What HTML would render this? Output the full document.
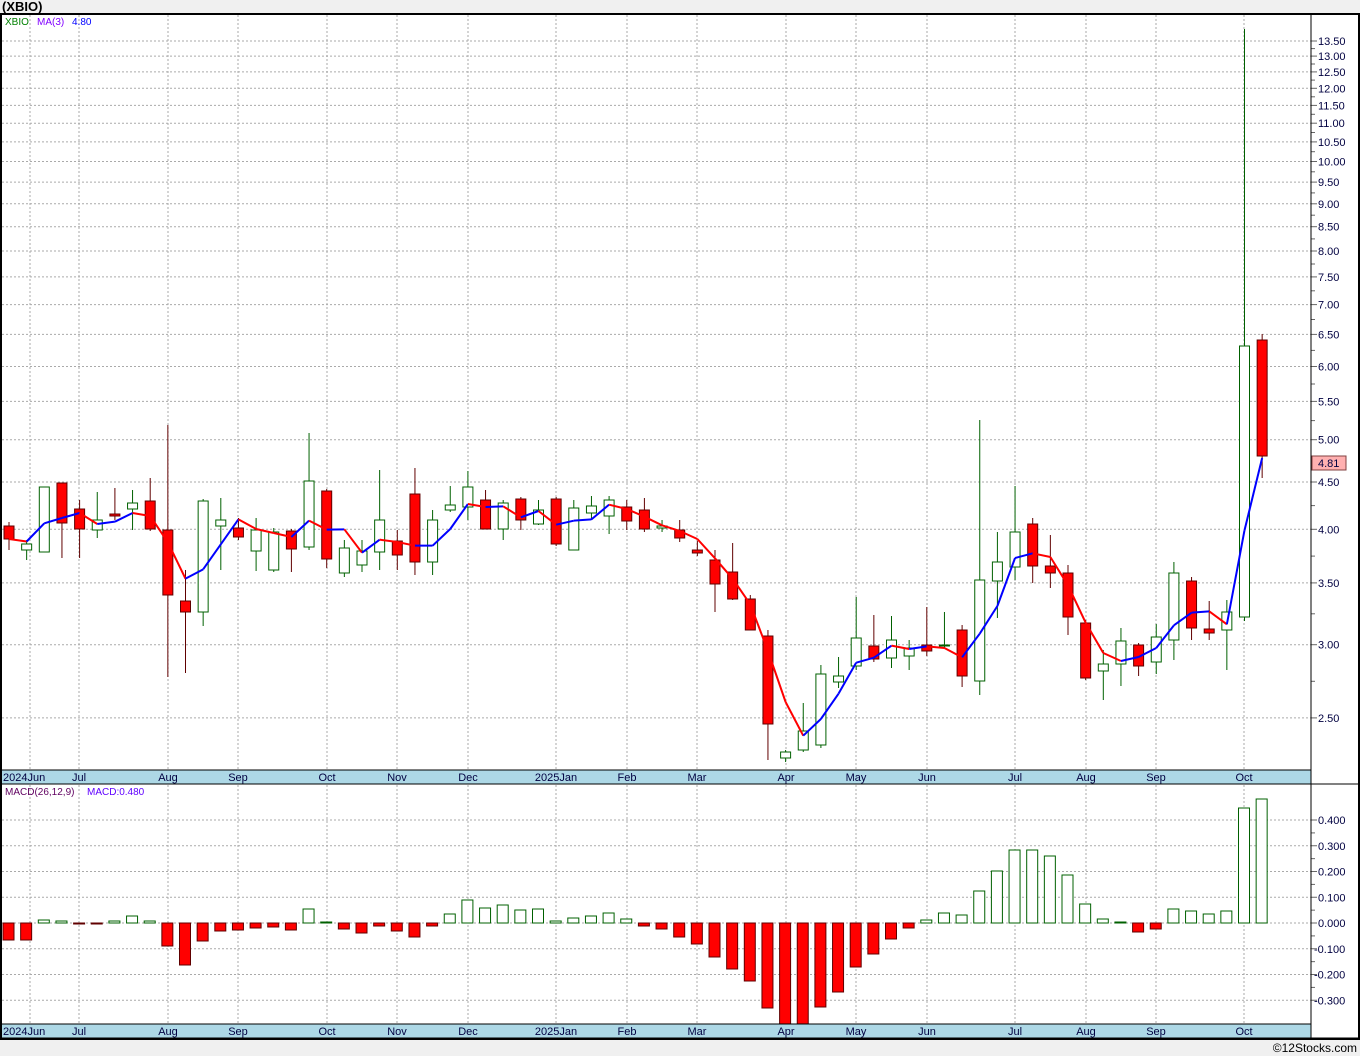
<!DOCTYPE html>
<html><head><meta charset="utf-8"><style>
html,body{margin:0;padding:0;background:#f0f0f0;}
body{width:1360px;height:1056px;position:relative;overflow:hidden;font-family:"Liberation Sans",sans-serif;}
svg{position:absolute;left:0;top:0;}
</style></head><body>
<svg id="s" width="1360" height="1056" xmlns="http://www.w3.org/2000/svg" font-family="Liberation Sans, sans-serif">
<text x="2" y="11" font-size="13" font-weight="bold" fill="#000">(XBIO)</text>
<rect x="1" y="14" width="1358" height="1025" fill="#fff" stroke="#000" stroke-width="2"/>
<g id="g"></g>
<text x="5" y="25" font-size="10" fill="#008000">XBIO</text>
<text x="37" y="25" font-size="10" fill="#8000ff">MA(3)</text>
<text x="72" y="25" font-size="10" fill="#0000ff">4.80</text>
<text x="5" y="795" font-size="10" fill="#600060">MACD(26,12,9)</text>
<text x="87" y="795" font-size="10" fill="#6000ff">MACD:0.480</text>
<text x="1357" y="1052" font-size="12" fill="#000" text-anchor="end">©12Stocks.com</text>
</svg>
<script>
var g=document.getElementById('g'),h='';
function ly(p){return 41+(Math.log(13.5)-Math.log(p))*401.4;}
// grid months
var mx=[79,168,238,327,397,468,556,627,697,786,856,927,1015,1086,1156,1244];
var ml=['Jul','Aug','Sep','Oct','Nov','Dec','2025Jan','Feb','Mar','Apr','May','Jun','Jul','Aug','Sep','Oct'];
mx.concat([30]).forEach(function(x){h+='<line x1="'+x+'" y1="15" x2="'+x+'" y2="770" stroke="#aaa" stroke-dasharray="2,2"/><line x1="'+x+'" y1="785" x2="'+x+'" y2="1024" stroke="#aaa" stroke-dasharray="2,2"/>';});
var tk=[];for(var p=13.5;p>=4.49;p-=0.5)tk.push(p);tk=tk.concat([4,3.5,3,2.5]);
tk.forEach(function(p){var y=ly(p).toFixed(1);h+='<line x1="2" y1="'+y+'" x2="1311" y2="'+y+'" stroke="#aaa" stroke-dasharray="2,2"/><line x1="1311" y1="'+y+'" x2="1317" y2="'+y+'" stroke="#666"/><text x="1318" y="'+(+y+4)+'" font-size="11" fill="#000040">'+p.toFixed(2)+'</text>';});
for(var i=0;i<tk.length-1;i++){var y=((ly(tk[i])+ly(tk[i+1]))/2).toFixed(1);h+='<line x1="1311" y1="'+y+'" x2="1315" y2="'+y+'" stroke="#666"/>';}
[0.4,0.3,0.2,0.1,0,-0.1,-0.2,-0.3].forEach(function(v){var y=923-v*257.5;h+='<line x1="2" y1="'+y+'" x2="1311" y2="'+y+'" stroke="#aaa" stroke-dasharray="2,2"/><line x1="1311" y1="'+y+'" x2="1317" y2="'+y+'" stroke="#666"/><text x="'+(v<0?1314:1318)+'" y="'+(y+4)+'" font-size="11" fill="#000040">'+(v<0?'-':'')+Math.abs(v).toFixed(3)+'</text>';
 var y2=y+12.9;if(v>-0.3)h+='<line x1="1311" y1="'+y2+'" x2="1315" y2="'+y2+'" stroke="#666"/>';});
var C=[[0,526,539,522,550],[1,544,550,540,560],[1,487,552,487,552],[0,483,523,483,558],[0,509,529,500,558],[1,520,530,492,538],[0,514,516,488,520],[1,503,509,490,530],[0,501,529,478,531],[0,530,595,425,677],[0,601,612,570,673],[1,501,612,499,626],[1,520,526,498,570],[0,528,537,518,540],[1,530,551,518,571],[1,532,570,528,572],[0,531,549,529,572],[1,481,547,433,550],[0,491,559,489,568],[1,548,573,540,577],[1,551,565,540,572],[1,520,552,470,570],[0,541,555,530,570],[0,494,562,468,575],[1,520,562,510,575],[1,505,510,486,512],[1,487,507,471,520],[0,500,529,490,529],[1,503,529,500,540],[0,499,520,497,530],[1,510,524,500,525],[0,499,544,497,546],[1,508,550,500,550],[1,506,513,496,520],[1,500,516,496,534],[0,507,521,500,530],[0,510,529,498,532],[1,526,528,520,532],[0,530,538,520,542],[0,550,553,541,556],[0,560,584,550,612],[0,572,599,543,600],[0,599,630,595,630],[0,636,724,630,760],[1,752,758,750,762],[1,731,750,703,752],[1,674,745,665,748],[1,676,682,657,688],[1,638,666,597,670],[0,646,659,615,662],[1,640,658,616,668],[1,648,656,640,670],[0,645,651,607,656],[1,645,646,612,648],[0,630,676,625,687],[1,580,681,420,695],[1,562,581,532,618],[1,532,567,486,580],[0,524,566,518,583],[0,566,573,535,588],[0,573,617,565,635],[0,623,678,620,680],[1,664,671,650,700],[1,641,664,628,686],[0,645,666,643,676],[1,637,662,624,674],[1,573,640,562,660],[0,581,628,577,640],[0,629,633,601,640],[1,612,630,600,670],[1,346,617,29,621],[0,340,456,334,478]];
var M=[-17,-17,3,2,-1,-1,2,7,2,-23,-42,-18,-8,-7,-5,-4,-7,14,1,-6,-10,-3,-8,-14,-3,9,23,15,18,13,14,2,5,7,10,4,-3,-6,-14,-21,-34,-46,-58,-85,-101,-101,-84,-69,-44,-31,-16,-5,3,10,8,32,52,73,73,67,48,19,4,1,-9,-6,14,12,9,12,115,124];
var cl=[];
C.forEach(function(c,i){var x=9+i*17.65;var up=c[0];
 h+='<line x1="'+x+'" y1="'+c[3]+'" x2="'+x+'" y2="'+c[4]+'" stroke="'+(up?'#006000':'#600000')+'"/>';
 h+='<rect x="'+(x-5)+'" y="'+c[1]+'" width="10" height="'+Math.max(1,c[2]-c[1])+'" fill="'+(up?'#fff':'#f00')+'" stroke="'+(up?'#006000':'#600000')+'"/>';
 cl.push(up?c[1]:c[2]);
 var v=M[i],x0=x-6;
 if(v>=0)h+='<rect x="'+x0+'" y="'+(923-v)+'" width="11" height="'+v+'" fill="#fff" stroke="#006000"/>';
 else h+='<rect x="'+x0+'" y="923" width="11" height="'+(-v)+'" fill="#f00" stroke="#600000"/>';
});
var ma=[];for(var i=0;i<cl.length;i++){var a=cl.slice(Math.max(0,i-2),i+1);ma.push(a.reduce(function(s,v){return s+v},0)/a.length);}
ma[cl.length-1]=458;
for(var i=1;i<ma.length;i++){var x1=9+(i-1)*17.65,x2=9+i*17.65;h+='<line x1="'+x1+'" y1="'+ma[i-1]+'" x2="'+x2+'" y2="'+ma[i]+'" stroke="'+(ma[i]>ma[i-1]?'#f00':'#00f')+'" stroke-width="2"/>';}
// date strips
[770,1024].forEach(function(y){h+='<rect x="2" y="'+y+'" width="1309" height="14" fill="#add8e6"/><line x1="1" y1="'+y+'" x2="1311" y2="'+y+'" stroke="#000"/><line x1="1" y1="'+(y+14)+'" x2="1359" y2="'+(y+14)+'" stroke="#000"/>';
 h+='<text x="3" y="'+(y+11)+'" font-size="11" fill="#000040">2024Jun</text>';
 mx.forEach(function(x,k){h+='<text x="'+x+'" y="'+(y+11)+'" font-size="11" fill="#000040" text-anchor="middle">'+ml[k]+'</text>';});});
h+='<line x1="1311" y1="14" x2="1311" y2="1038" stroke="#000"/>';
h+='<rect x="1312" y="456" width="34" height="14" fill="#ffb0b0" stroke="#804040"/><text x="1318" y="467" font-size="11" fill="#000040">4.81</text>';
g.innerHTML=h;
</script>
</body></html>
